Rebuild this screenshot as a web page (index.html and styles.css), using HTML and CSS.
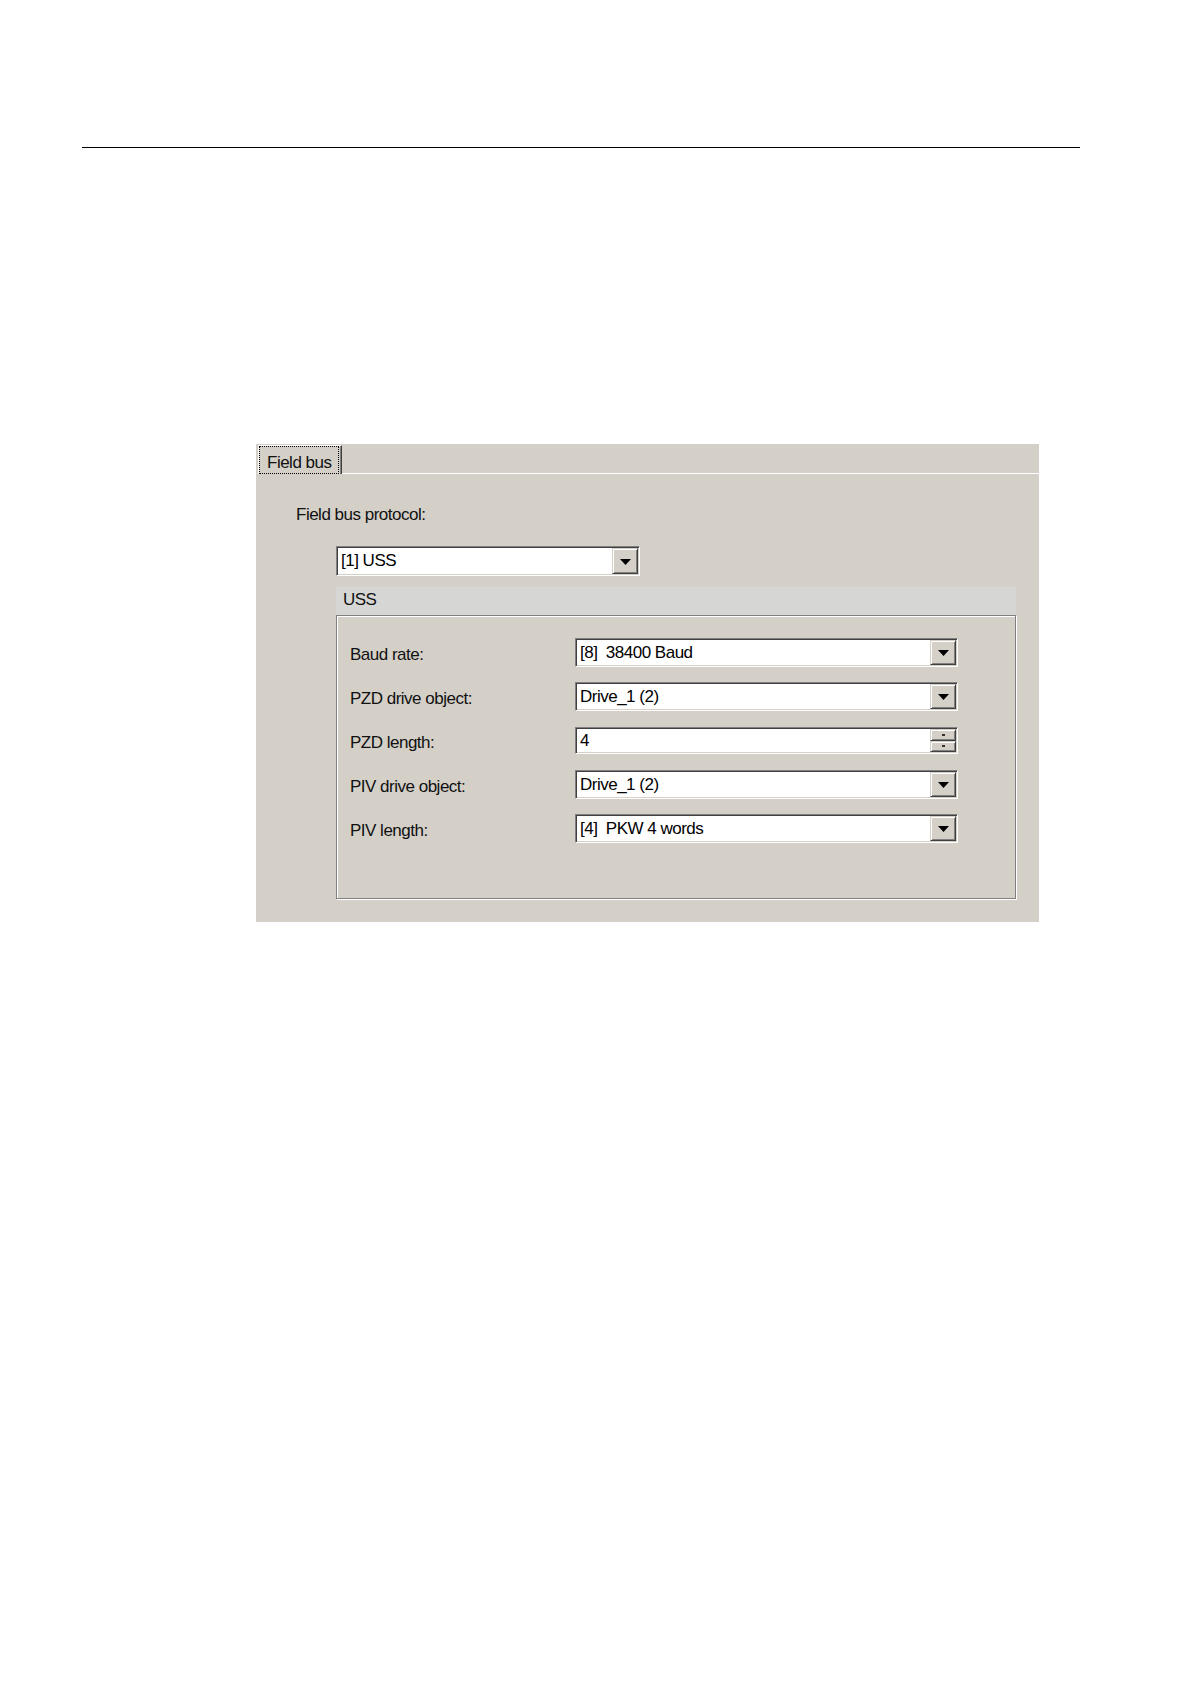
FILE: index.html
```html
<!DOCTYPE html>
<html lang="en">
<head>
<meta charset="utf-8">
<title>Field bus</title>
<link rel="stylesheet" href="styles.css">
</head>
<body>
<div class="rule"></div>
<div class="panel">
  <div class="tabstrip">
    <div class="tab"><span class="tab-focus">Field bus</span></div>
    <div class="tab-rest"></div>
  </div>
  <div class="content">
    <div class="proto-label">Field bus protocol:</div>
    <div class="combo combo-proto">
      <span class="combo-text">[1] USS</span>
      <span class="drop-btn"><svg width="11" height="6" viewBox="0 0 11 6"><polygon points="0,0 11,0 5.5,6" fill="#000"/></svg></span>
    </div>
    <div class="band">USS</div>
    <div class="group">
      <div class="row">
        <span class="label">Baud rate:</span>
        <div class="combo">
          <span class="combo-text">[8]  38400 Baud</span>
          <span class="drop-btn"><svg width="11" height="6" viewBox="0 0 11 6"><polygon points="0,0 11,0 5.5,6" fill="#000"/></svg></span>
        </div>
      </div>
      <div class="row">
        <span class="label">PZD drive object:</span>
        <div class="combo">
          <span class="combo-text">Drive_1 (2)</span>
          <span class="drop-btn"><svg width="11" height="6" viewBox="0 0 11 6"><polygon points="0,0 11,0 5.5,6" fill="#000"/></svg></span>
        </div>
      </div>
      <div class="row">
        <span class="label">PZD length:</span>
        <div class="combo spin-field">
          <span class="combo-text">4</span>
          <span class="spin">
            <span class="spin-btn"><span class="spin-dot"></span></span>
            <span class="spin-btn"><span class="spin-dot"></span></span>
          </span>
        </div>
      </div>
      <div class="row">
        <span class="label">PIV drive object:</span>
        <div class="combo">
          <span class="combo-text">Drive_1 (2)</span>
          <span class="drop-btn"><svg width="11" height="6" viewBox="0 0 11 6"><polygon points="0,0 11,0 5.5,6" fill="#000"/></svg></span>
        </div>
      </div>
      <div class="row">
        <span class="label">PIV length:</span>
        <div class="combo">
          <span class="combo-text">[4]  PKW 4 words</span>
          <span class="drop-btn"><svg width="11" height="6" viewBox="0 0 11 6"><polygon points="0,0 11,0 5.5,6" fill="#000"/></svg></span>
        </div>
      </div>
    </div>
  </div>
</div>
</body>
</html>
```
FILE: styles.css
```css
html, body {
  margin: 0;
  padding: 0;
  background: #fff;
}

body {
  font-family: "Liberation Sans", Arial, sans-serif;
  font-size: 17px;
  letter-spacing: -0.5px;
  line-height: 22px;
  color: #111;
}

.rule {
  margin: 147px 0 0 82px;
  width: 998px;
  height: 1px;
  background: #000;
}

.panel {
  margin: 296px 0 0 256px;
  width: 783px;
  height: 478px;
  background: #d4d0c8;
  display: flex;
  flex-direction: column;
}

.tabstrip {
  height: 30px;
  display: flex;
  align-items: flex-end;
}

.tab {
  box-sizing: border-box;
  margin-left: 2px;
  width: 84px;
  height: 29px;
  border-top: 1px solid #fff;
  border-left: 1px solid #fff;
  border-right: 1px solid #404040;
  box-shadow: inset -1px 0 #808080;
  display: flex;
}

.tab-focus {
  box-sizing: border-box;
  display: block;
  width: 80px;
  height: 28px;
  border: 1px dotted #000;
  padding: 5px 0 0 7px;
  white-space: nowrap;
}

.tab-rest {
  flex: 1;
  height: 1px;
  background: #fff;
}

.content {
  padding: 30px 0 0 40px;
  display: flex;
  flex-direction: column;
  align-items: flex-start;
}

.proto-label {
  height: 22px;
}

.combo {
  box-sizing: border-box;
  width: 383px;
  height: 29px;
  padding: 1px;
  border: 1px solid;
  border-color: #808080 #fff #fff #808080;
  box-shadow: inset 1px 1px #404040, inset -1px -1px #d4d0c8;
  background: #fff;
  display: flex;
  align-items: stretch;
}

.combo-proto {
  margin: 20px 0 0 40px;
  width: 304px;
  height: 30px;
}

.combo-text {
  flex: 1;
  padding-left: 3px;
  white-space: pre;
  display: flex;
  align-items: center;
  color: #000;
}

.drop-btn {
  box-sizing: border-box;
  width: 26px;
  border: 1px solid;
  border-color: #d4d0c8 #404040 #404040 #d4d0c8;
  box-shadow: inset 1px 1px #fff, inset -1px -1px #808080;
  background: #d4d0c8;
  display: flex;
  align-items: center;
  justify-content: center;
}

.drop-btn svg {
  display: block;
  margin-top: 1px;
}

.band {
  box-sizing: border-box;
  margin: 11px 0 0 40px;
  width: 680px;
  height: 28px;
  padding: 2px 0 0 7px;
  background: #d6d6d4;
}

.group {
  box-sizing: border-box;
  margin-left: 40px;
  width: 680px;
  height: 284px;
  border: 1px solid #808080;
  box-shadow: inset 1px 1px #fff, 1px 1px #fff;
  padding: 22px 0 0 13px;
  display: flex;
  flex-direction: column;
  gap: 15px;
}

.row {
  height: 29px;
  display: flex;
  align-items: center;
}

.label {
  width: 225px;
  padding-top: 4px;
  white-space: nowrap;
}

.spin-field {
  height: 27px;
}

.spin {
  width: 26px;
  display: flex;
  flex-direction: column;
}

.spin-btn {
  box-sizing: border-box;
  flex: 1;
  border: 1px solid;
  border-color: #d4d0c8 #404040 #404040 #d4d0c8;
  box-shadow: inset 1px 1px #fff, inset -1px -1px #808080;
  background: #d4d0c8;
  display: flex;
  align-items: center;
  justify-content: center;
}

.spin-dot {
  width: 3px;
  height: 2px;
  background: #333;
}
```
